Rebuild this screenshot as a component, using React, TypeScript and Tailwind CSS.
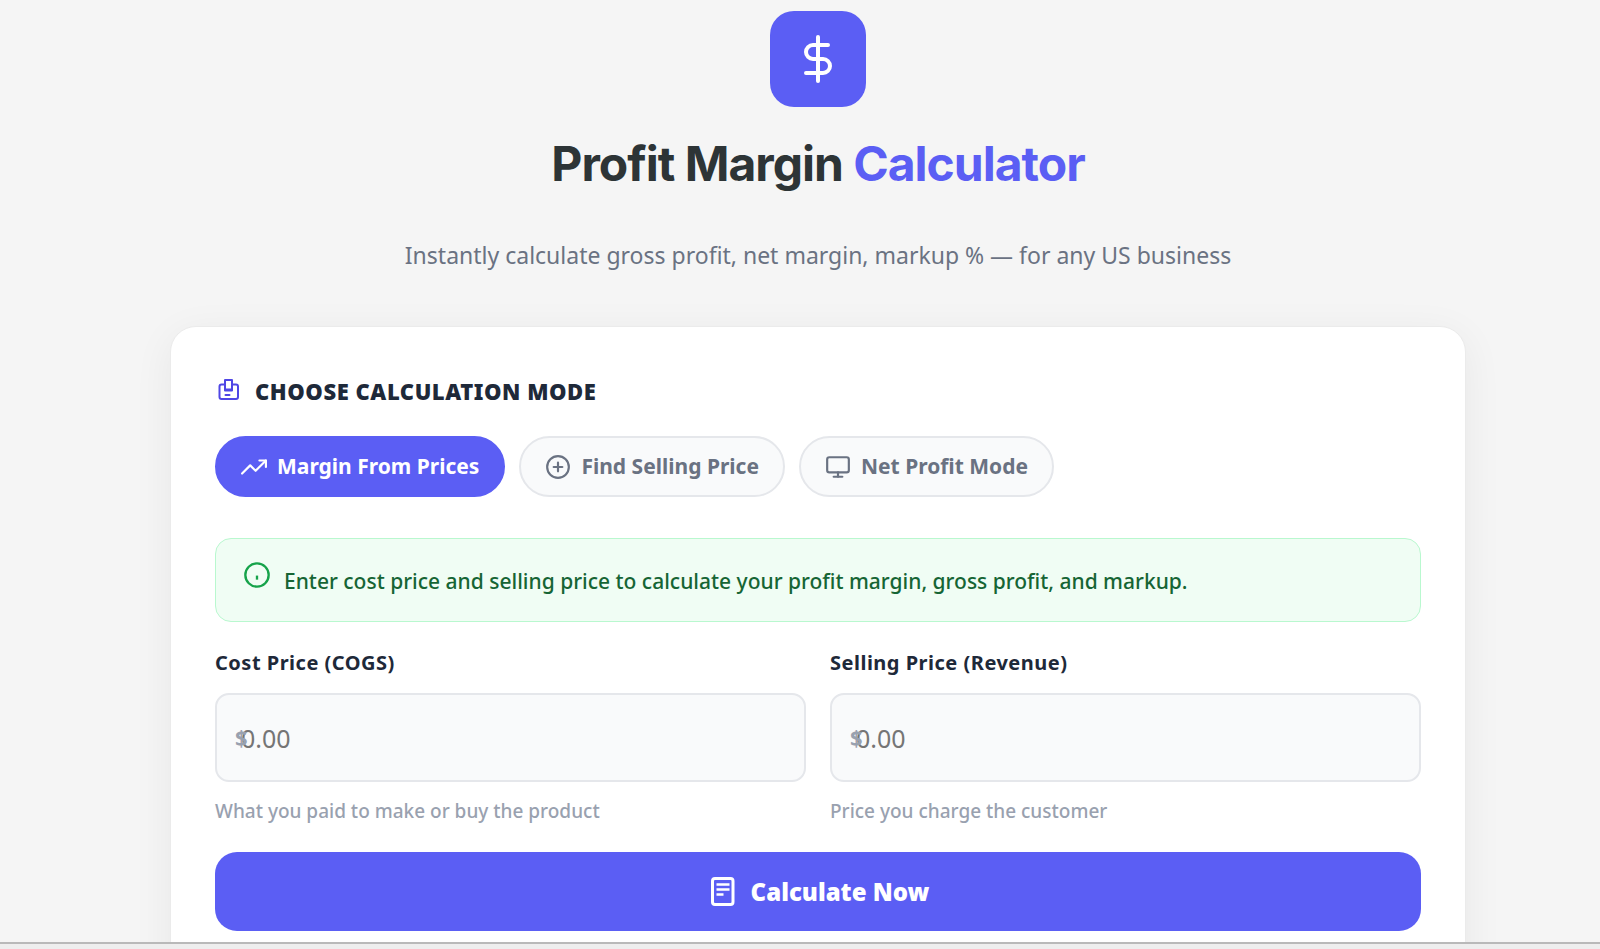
import { useState, type ReactNode } from "react";
import clsx from "clsx";
import { FiDollarSign, FiMonitor, FiPlusCircle, FiTrendingUp } from "react-icons/fi";

const modes = [
  { id: "margin", label: "Margin From Prices", icon: FiTrendingUp },
  { id: "selling", label: "Find Selling Price", icon: FiPlusCircle },
  { id: "net", label: "Net Profit Mode", icon: FiMonitor },
];

const fields = [
  {
    id: "cost",
    label: "Cost Price (COGS)",
    hint: "What you paid to make or buy the product",
  },
  {
    id: "revenue",
    label: "Selling Price (Revenue)",
    hint: "Price you charge the customer",
  },
];

function ModeIcon() {
  return (
    <svg
      viewBox="0 0 26 26"
      className="size-[26px] text-[#4f46e5]"
      fill="none"
      stroke="currentColor"
      strokeWidth="2"
      strokeLinecap="round"
      strokeLinejoin="round"
      aria-hidden="true"
    >
      <path d="M10 6.500H6.500a2 2 0 0 0-2 2v10.500a2 2 0 0 0 2 2h14.500a2 2 0 0 0 2-2V8.500a2 2 0 0 0-2-2H17" />
      <path d="M10 2h7v10.500h-7z" />
      <path d="M10 11.500h7" />
      <path d="M10.500 17h4" />
    </svg>
  );
}

function InfoIcon() {
  return (
    <svg
      viewBox="0 0 24 24"
      className="size-7 shrink-0 text-[#16a34a]"
      fill="none"
      stroke="currentColor"
      strokeWidth="2"
      aria-hidden="true"
    >
      <circle cx="12" cy="12" r="10" />
      <path d="M12 12.500v3.500" />
    </svg>
  );
}

function SheetIcon() {
  return (
    <svg
      viewBox="0 0 32 32"
      className="size-8"
      fill="none"
      stroke="currentColor"
      strokeWidth="3"
      aria-hidden="true"
    >
      <rect x="5.500" y="2.500" width="20.500" height="26" rx="2.500" />
      <path d="M9.500 8.500h13M9.500 13.500h13M9.500 18.500h7" strokeWidth="2.500" />
    </svg>
  );
}

function MoneyField({ id, label, hint }: { id: string; label: string; hint: string }) {
  return (
    <div className="flex flex-col">
      <label
        htmlFor={id}
        className="text-xl leading-7 font-bold tracking-wide text-gray-800"
      >
        {label}
      </label>
      <div className="relative mt-4">
        <span className="absolute inset-y-0 left-5 flex items-center text-[22px] font-bold text-gray-400">
          $
        </span>
        <input
          id={id}
          type="text"
          inputMode="decimal"
          placeholder="0.00"
          className="h-[89px] w-full rounded-[14px] border-2 border-gray-200 bg-gray-50 px-6 text-[25px] text-gray-800 outline-none placeholder:text-[#757575] focus:border-[#5b5ef4]"
        />
      </div>
      <p className="mt-[15px] text-[19px] leading-7 font-medium text-gray-400">{hint}</p>
    </div>
  );
}

function SectionTitle({ children }: { children: ReactNode }) {
  return (
    <h2 className="flex items-center gap-[14px] text-[22px] leading-8 font-black tracking-wide text-gray-800 uppercase">
      <ModeIcon />
      {children}
    </h2>
  );
}

export default function App() {
  const [mode, setMode] = useState("margin");

  return (
    <div className="flex h-screen flex-col bg-neutral-100 font-['Noto_Sans','Open_Sans',sans-serif]">
      <main className="min-h-0 flex-1 overflow-hidden pl-9">
        <div className="mx-auto max-w-[1296px] pt-[11px]">
          <header className="flex flex-col items-center text-center">
            <div className="flex size-24 items-center justify-center rounded-3xl bg-[#5b5ef4] text-white">
              <FiDollarSign className="size-12" aria-hidden="true" />
            </div>
            <h1 className="mt-[29px] font-['Inter',sans-serif] text-5xl leading-14 font-bold tracking-[-1px] text-[#2d3436]">
              Profit Margin <span className="text-[#5b5ef4]">Calculator</span>
            </h1>
            <p className="mt-[43px] text-[23px] leading-10 text-gray-500">
              Instantly calculate gross profit, net margin, markup % — for any US business
            </p>
          </header>

          <section className="mt-[51px] rounded-[26px] border border-[#ebebeb] bg-white px-11 pt-12 pb-16 shadow-[0_8px_40px_rgba(0,0,0,0.06)]">
            <SectionTitle>Choose Calculation Mode</SectionTitle>

            <div className="mt-[29px] flex flex-wrap gap-[14px]">
              {modes.map(({ id, label, icon: Icon }) => (
                <button
                  key={id}
                  type="button"
                  aria-pressed={mode === id}
                  onClick={() => setMode(id)}
                  className={clsx(
                    "flex h-[61px] items-center gap-[10px] rounded-full border-2 px-6 text-[21px] font-bold",
                    mode === id
                      ? "border-[#5b5ef4] bg-[#5b5ef4] text-white"
                      : "border-gray-200 bg-gray-50 text-gray-500"
                  )}
                >
                  <Icon className="size-[26px]" aria-hidden="true" />
                  {label}
                </button>
              ))}
            </div>

            <div className="mt-[41px] flex items-start gap-[13px] rounded-2xl border border-green-200 bg-green-50 px-[27px] pt-[22px] pb-5">
              <InfoIcon />
              <p className="text-[21px] leading-10 font-medium text-[#166534]">
                Enter cost price and selling price to calculate your profit margin, gross profit, and markup.
              </p>
            </div>

            <div className="mt-[27px] grid grid-cols-2 gap-6">
              {fields.map((field) => (
                <MoneyField key={field.id} {...field} />
              ))}
            </div>

            <button
              type="button"
              className="mt-[27px] flex h-[79px] w-full items-center justify-center gap-3 rounded-[22px] bg-[#5b5ef4] text-2xl font-black text-white"
            >
              <SheetIcon />
              Calculate Now
            </button>
          </section>
        </div>
      </main>
      <div className="h-[7px] shrink-0 border-t-2 border-[#b9b9b9] bg-[#eeeeee]" />
    </div>
  );
}
